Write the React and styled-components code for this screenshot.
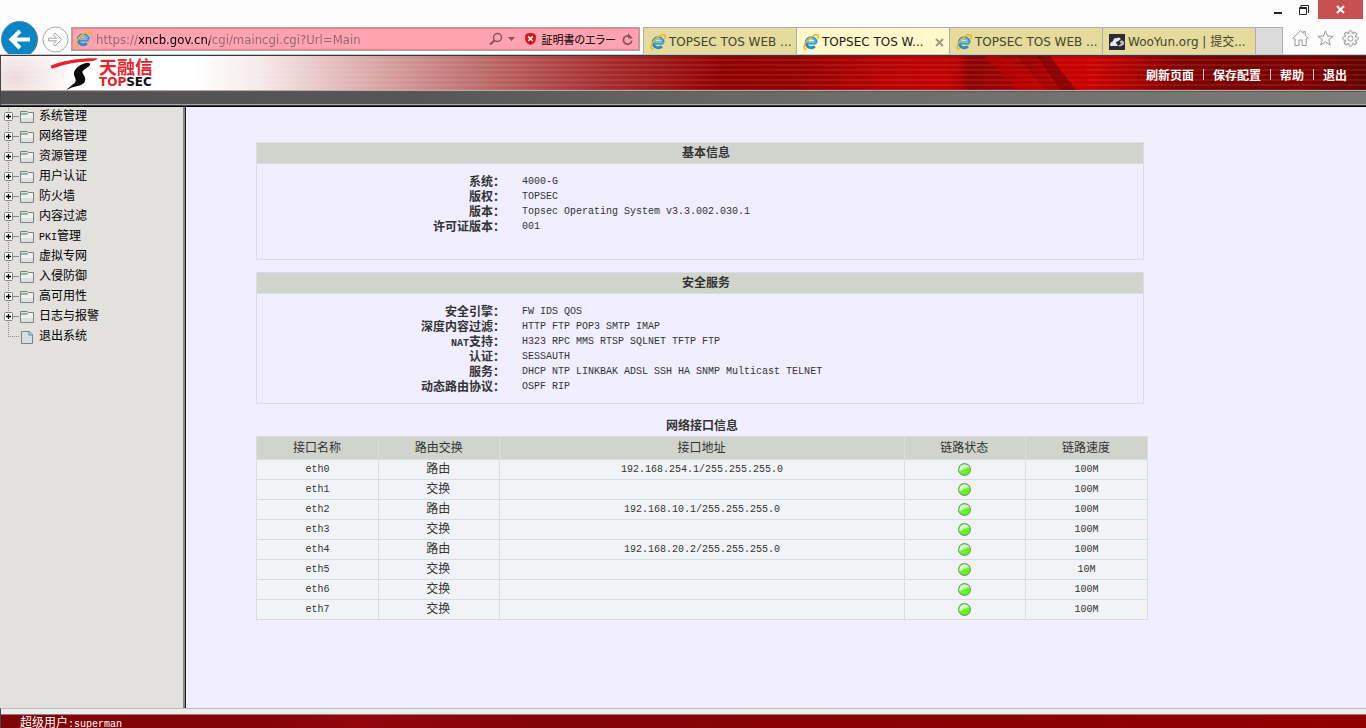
import React from 'react';
import styled, { createGlobalStyle } from 'styled-components';

const GlobalStyle = createGlobalStyle`
  *, *::before, *::after { box-sizing: border-box; }
  body {
    margin: 0;
    font-family: "Liberation Mono", "Noto Sans CJK SC", monospace;
    font-size: 12px;
    color: #333;
    background: #f0eeff;
  }
  a { color: inherit; text-decoration: none; }
  button { font: inherit; color: inherit; border: 0; padding: 0; background: none; }
  svg { display: block; flex: none; }
`;

const Page = styled.div`
  display: flex;
  flex-direction: column;
  height: 100vh;
  overflow: hidden;
`;

/* ---------- browser frame ---------- */

const Browser = styled.div`
  flex: none;
  overflow: hidden;
  background: #fcfcfc;
  border-bottom: 1px solid #c4c4c4;
`;

const TitleBar = styled.div`
  display: flex;
  justify-content: flex-end;
  height: 27px;
  padding-right: 3px;
`;

const WindowButton = styled.button`
  display: flex;
  align-items: center;
  justify-content: center;
  width: ${(p) => (p.$close ? 45 : 27)}px;
  height: 19px;
  margin-right: ${(p) => (p.$gap ? 1 : 0)}px;
  background: ${(p) => (p.$close ? '#c75050' : 'transparent')};
`;

const NavRow = styled.div`
  display: flex;
  height: 27px;
`;

const HistoryButtons = styled.div`
  display: flex;
  flex: none;
  gap: 4px;
  width: 71px;
  height: 38px;
  margin-top: -7px;
  padding-left: 1px;
  align-items: center;
`;

const AddressBar = styled.form`
  display: flex;
  flex: 1;
  align-items: center;
  gap: 5px;
  min-width: 0;
  height: 24px;
  margin: 0 3px 0 0;
  padding: 0 5px 0 3px;
  border: 1px solid #a9a9a9;
  background: #ffa3b0;
  box-shadow: inset 0 0 0 1px #ff7b8a;
`;

const AddressInput = styled.input`
  flex: 1;
  min-width: 0;
  height: 20px;
  padding: 0;
  border: 0;
  outline: 0;
  font: 13px "DejaVu Sans Condensed", "Noto Sans", sans-serif;
  color: transparent;
  caret-color: #000;
  background: linear-gradient(to right, #8a6a70 43px, #000 43px, #000 114px, #8a6a70 114px);
  background-clip: text;
  -webkit-background-clip: text;
`;

const CertButton = styled.button`
  display: flex;
  align-items: center;
  gap: 5px;
  margin: 0 1px 0 5px;
  font: 11px "Noto Sans CJK JP", sans-serif;
  font-feature-settings: "palt";
  color: #000;
  white-space: nowrap;
`;

const IconButton = styled.button`
  display: flex;
`;

const Tabs = styled.div`
  display: flex;
  flex: none;
  border-right: 1px solid #adadad;
`;

const Tab = styled.button`
  display: flex;
  align-items: center;
  gap: 3px;
  width: 153px;
  padding: 2px 5px 0 6px;
  border-top: 1px solid #adadad;
  border-left: 1px solid #adadad;
  font: 12px "DejaVu Sans", "Noto Sans CJK SC", sans-serif;
  white-space: nowrap;
  color: ${(p) => (p.$active ? '#1c1c14' : '#45432f')};
  background: ${(p) => (p.$active ? '#fff8ca' : '#e4db9c')};
`;

const TabText = styled.span`
  flex: 1;
  height: 16px;
  line-height: 16px;
  text-align: left;
`;

const NewTab = styled.button`
  width: 27px;
  border-top: 1px solid #adadad;
  border-left: 1px solid #adadad;
  background: #dbdbdb;
`;

const Tools = styled.div`
  display: flex;
  flex: none;
  align-items: center;
  gap: 8px;
  padding: 0 7px 5px 9px;
`;

/* ---------- site header ---------- */

const Header = styled.header`
  position: relative;
  z-index: 1;
  flex: none;
  border-top: 1px solid #3a3a3a;
  border-left: 1px solid #444;
  box-shadow: 0 1px 0 #000;
`;

const Banner = styled.div`
  position: relative;
  display: flex;
  justify-content: space-between;
  height: 34px;
  background:
    repeating-linear-gradient(to bottom, transparent 0 3px, rgba(255, 255, 255, 0.16) 4px, transparent 5px),
    radial-gradient(ellipse 60px 40px at 14px 22px, rgba(190, 120, 120, 0.28), transparent),
    linear-gradient(to right,
      #fff 0, #fff 14%, #f6e9e9 19%, #e9c9c9 23%, #d39a98 29%, #c07573 34%,
      #b04a4a 40%, #a42a2a 45%, #9a1010 50%, #900000 53%, #930000 58%,
      #b80000 65%, #c00000 69%, #b40000 70%, #8c0000 71%, #a00000 74%, #c00000 77%,
      #c80000 80%, #a80000 83%, #820000 86%, #780000 91%, #820000 95%, #640000 100%);
`;

const BannerRays = styled.svg`
  position: absolute;
  top: 0;
  left: 70%;
`;

const Logo = styled.a`
  display: flex;
  gap: 1px;
  padding: 1px 0 0 49px;
`;

const LogoText = styled.span`
  display: flex;
  flex-direction: column;
  font-weight: bold;
  color: #e3242b;
`;

const LogoChinese = styled.span`
  font-family: "Noto Sans CJK SC", sans-serif;
  font-size: 18px;
  line-height: 18px;
`;

const LogoLatin = styled.span`
  font-family: "DejaVu Sans", sans-serif;
  font-size: 12px;
  line-height: 14px;
  b { color: #111; }
`;

const HeaderNav = styled.nav`
  position: relative;
  display: flex;
  align-items: flex-end;
  padding: 0 19px 3px 0;
  font-weight: bold;
  line-height: 20px;
  color: #fff;
`;

const HeaderLink = styled.a`
  & + &::before {
    content: "";
    display: inline-block;
    width: 1px;
    height: 11px;
    margin: 0 9px;
    vertical-align: 0;
    background: #e6caca;
  }
`;

const Strip = styled.div`
  height: 16px;
  border-top: 1px solid #b9a8a8;
  border-bottom: 1px solid #3c3c3c;
  box-shadow: inset 0 -1px 0 #a5a5a5, inset 0 1px 0 #5a5a5a;
  background: linear-gradient(to right, #505050, #565656 30%, #6c6c69 60%, #7a7a79);
`;

/* ---------- body ---------- */

const Body = styled.div`
  display: flex;
  flex: 1;
  min-height: 0;
`;

const Sidebar = styled.aside`
  flex: none;
  width: 186px;
  background: #e2e1dd;
  border-right: 1px solid #1e1e1e;
  box-shadow: inset -2px 0 0 #858585;
`;

const Tree = styled.ul`
  margin: 0;
  padding: 0;
  list-style: none;
`;

const TreeLink = styled.a`
  display: flex;
  align-items: center;
  height: 20px;
  color: #000;
`;

const TreeLabel = styled.span`
  margin-left: 4px;
  padding-top: 3px;
  line-height: 17px;
`;

const Latin = styled.span`
  font-size: 10px;
`;

const Main = styled.main`
  flex: 1;
  min-width: 0;
  overflow: auto;
  padding: 36px 218px 0 70px;
  background: #f0eeff;
`;

const Panel = styled.section`
  min-height: 118px;
  margin: 0 4px 12px 0;
  padding-bottom: 9px;
  border: 1px solid #dcdce6;
`;

const PanelTitle = styled.h2`
  margin: 0;
  height: 21px;
  padding: 2px 0 0 12px;
  border-bottom: 1px solid #dadde0;
  font-size: 12px;
  line-height: 18px;
  text-align: center;
  background: #d0d4cc;
`;

const Facts = styled.dl`
  display: grid;
  grid-template-columns: 28% 1fr;
  column-gap: 17px;
  margin: 10px 0 0;
`;

const FactName = styled.dt`
  height: 15px;
  line-height: 18px;
  text-align: right;
  font-weight: bold;
`;

const FactValue = styled.dd`
  height: 15px;
  margin: 0;
  font-size: 10px;
  line-height: 15px;
`;

const InterfaceTable = styled.table`
  width: 100%;
  table-layout: fixed;
  border-collapse: collapse;
  text-align: center;
`;

const Caption = styled.caption`
  height: 20px;
  padding-top: 2px;
  line-height: 18px;
  font-weight: bold;
`;

const Column = styled.col`
  width: ${(p) => p.$width};
`;

const HeadCell = styled.th`
  height: 23px;
  padding: 2px 1px 0 0;
  border: 1px solid #d9dde2;
  font-weight: normal;
  line-height: 18px;
  background: #d0d4cc;
`;

const Cell = styled.td`
  height: 20px;
  padding: ${(p) => (p.$cjk ? '2px 2px 0 0' : 0)};
  border: 1px solid #d9dde2;
  font-size: ${(p) => (p.$cjk ? 12 : 10)}px;
  line-height: ${(p) => (p.$cjk ? 17 : 18)}px;
  background: #f2f3f6;
  svg { margin: 0 auto; }
`;

/* ---------- status bar ---------- */

const StatusBar = styled.footer`
  flex: none;
  height: 20px;
  overflow: hidden;
  border-left: 1px solid #444;
  border-top: 1px solid #bdbdbd;
  background: #ececec;
`;

const StatusText = styled.div`
  margin-top: 5px;
  padding-left: 19px;
  border-top: 1px solid #9a7a7a;
  line-height: 18px;
  color: #fff;
  background: linear-gradient(to right, #7e0408, #860408 20%, #92060c 26%, #840408 40%, #900000);
`;

/* ---------- icons ---------- */

const IeIcon = () => (
  <svg width="16" height="16" viewBox="0 0 16 16" fill="none" aria-hidden="true">
    <path d="M4 8.900h9.500M13.200 8.600a5 5.100 0 1 0-1.400 3.700" stroke="#2a8cc9" strokeWidth="3" />
    <path d="M4.600 8.500h7.800M12.200 7.400a4.200 4.200 0 0 0-8.200 .8" stroke="#6cc5ee" strokeWidth="1.400" />
    <path d="M3.600 15.100C-.2 15.800 .4 10.600 5 5.800S14.600-.6 15.200 1.600c.3 1-.1 2.400-.8 3.600" stroke="#f2b61c" strokeWidth="1.600" />
  </svg>
);

const CloudIcon = () => (
  <svg width="16" height="16" viewBox="0 0 16 16" aria-hidden="true">
    <rect width="16" height="16" fill="#282b33" />
    <path d="M1.500 12C.3 10 2 7.500 4 7.500 4 5 6 3.200 8 4.200 9.500 2.800 12 4 11.500 5.500L6.800 8.500 9 12Z" fill="#e8e8e8" />
    <path d="M10 12.500 8 9.500l4.500-3.200c2 .2 3 1.700 2.600 3.300-.4 1.600-2.500 2.900-5.100 2.900Z" fill="#b9bcc2" />
    <path d="m7.500 8.800 3.200-2 .5 2.200 1.800-.4-3.400 3.200Z" fill="#282b33" />
  </svg>
);

const BackIcon = () => (
  <svg width="37" height="37" viewBox="0 0 37 37" fill="none" aria-hidden="true">
    <circle cx="18.500" cy="18.500" r="18" fill="#0a86c8" stroke="#5b7f93" />
    <path d="M29 18.500H11M19 10l-8.500 8.500L19 27" stroke="#fff" strokeWidth="4" />
  </svg>
);

const ForwardIcon = () => (
  <svg width="27" height="27" viewBox="0 0 27 27" fill="none" stroke="#a6a6a6" aria-hidden="true">
    <circle cx="13.500" cy="13.500" r="12.500" />
    <path d="M6.500 12.200h8l-3.300-3.300L13 7l6.600 6.500L13 20l-1.800-1.900 3.300-3.300h-8Z" />
  </svg>
);

const Minimize = () => (
  <svg width="10" height="16" viewBox="0 0 10 16" aria-hidden="true">
    <path d="M2 10h8v2H2z" fill="#222" />
  </svg>
);

const Restore = () => (
  <svg width="12" height="12" viewBox="0 0 12 12" fill="none" stroke="#222" aria-hidden="true">
    <path d="M1.500 3.500h7v7h-7z" />
    <path d="M1 4.500h8M3 1.500h7.500V9" />
    <path d="M3 1.500V3" />
  </svg>
);

const Close = ({ size = 9, color = '#fff' }) => (
  <svg width={size} height={size} viewBox="0 0 9 9" aria-hidden="true">
    <path d="m1 1 7 7M8 1 1 8" stroke={color} strokeWidth="2" />
  </svg>
);

const SearchIcon = () => (
  <svg width="14" height="14" viewBox="0 0 14 14" fill="none" stroke="#85545c" aria-hidden="true">
    <circle cx="8.500" cy="5.500" r="4" strokeWidth="1.500" />
    <path d="M5.500 8.500 1 12.500" strokeWidth="2.200" />
  </svg>
);

const CaretIcon = () => (
  <svg width="7" height="4" viewBox="0 0 7 4" aria-hidden="true">
    <path d="M0 0h7L3.500 4Z" fill="#85545c" />
  </svg>
);

const ShieldIcon = () => (
  <svg width="11" height="12" viewBox="0 0 11 12" aria-hidden="true">
    <path d="M2 .5 5.500 0 9 .5l1.800 1.700V6C10.800 9 8.500 11 5.500 12 2.500 11 .2 9 .2 6V2.200Z" fill="#d0141c" />
    <path d="m3.200 3.400 4.600 4.600M7.800 3.400 3.200 8" stroke="#fff" strokeWidth="1.500" />
  </svg>
);

const ReloadIcon = () => (
  <svg width="12" height="13" viewBox="0 0 12 13" fill="none" aria-hidden="true">
    <path d="M9.800 7.500A4.200 4.200 0 1 1 7 3.100" stroke="#85545c" strokeWidth="1.700" />
    <path d="M6 0v5.500h5Z" fill="#85545c" />
  </svg>
);

const HomeIcon = () => (
  <svg width="17" height="16" viewBox="0 0 17 16" fill="none" stroke="#999" aria-hidden="true">
    <path d="M.8 8.200 8.500.8l2.700 2.600V1.500h2v3.800l3 2.900-1.200 1.200-.8-.8v6.900h-4V10H7v5.500H3V8.600l-1 .8Z" />
  </svg>
);

const StarIcon = () => (
  <svg width="17" height="16" viewBox="0 0 17 16" fill="none" stroke="#999" aria-hidden="true">
    <path d="m8.500.9 2 5.200 5.700.2-4.500 3.400 1.600 5.400-4.800-3.200-4.800 3.200 1.600-5.400L.8 6.300l5.700-.2Z" />
  </svg>
);

const GearIcon = () => {
  const teeth = Array.from({ length: 8 }, (_, i) => i * 45);
  return (
    <svg width="17" height="17" viewBox="-8.500 -8.500 17 17" aria-hidden="true">
      {teeth.map((a) => (
        <rect key={a} x="-1.600" y="-7.600" width="3.200" height="4" rx=".6" fill="#fcfcfc" stroke="#999" transform={`rotate(${a})`} />
      ))}
      <circle r="5.300" fill="#fcfcfc" />
      {teeth.map((a) => (
        <path key={a} d="M1.600-5.300A5.500 5.500 0 0 1 2.600-4.900" fill="none" stroke="#999" transform={`rotate(${a})`} />
      ))}
      <circle r="2.600" fill="none" stroke="#999" />
    </svg>
  );
};

const TopsecMark = () => (
  <svg width="48" height="33" viewBox="0 0 48 33" aria-hidden="true">
    <path d="M1 8.500C14 3.500 30 1 48 1.400 46 3 44 3.800 41 4.200 28 4.600 15 7 2.500 11.600 1 11.300.5 9.500 1 8.500Z" fill="#e3242b" />
    <path d="M37.500 5.700c2.400-.4 3.300 1.500 2 3.100C36 11.500 32.600 13.500 32.400 15c.3 2.600 3.600 4.800 2.700 8.400-.8 3.400-4 4.600-7.600 5.600-4.300 1-7.500 2-10.800 3.900 3-3.700 7.100-5.500 8.600-7.900 1.600-2.700-1.500-5.200-1.400-8.500.2-5.200 7.300-10.100 13.600-10.800Z" fill="#0c0c0c" />
  </svg>
);

const TreeJoint = ({ leaf }) => (
  <svg width="20" height="20" viewBox="0 0 20 20" fill="none" aria-hidden="true">
    <path d={leaf ? 'M8.500 0v11' : 'M8.500 0v20'} stroke="#8a8a8a" strokeDasharray="1 1" />
    {leaf ? (
      <path d="M8 10.500h12" stroke="#8a8a8a" strokeDasharray="1 1" />
    ) : (
      <>
        <path d="M13 10.500h6" stroke="#8a8a8a" />
        <rect x="4.500" y="6.500" width="8" height="8" rx="1" fill="#fff" stroke="#848484" />
        <path d="M6 10.500h5M8.500 8v5" stroke="#000" strokeWidth="1.300" />
      </>
    )}
  </svg>
);

const FolderIcon = () => (
  <svg width="15" height="16" viewBox="0 -2 15 16" aria-hidden="true">
    <path d="M.5 2.500h6l1 1 1-1h5v10H.5z" fill="#f3f1e8" stroke="#7b8280" />
    <path d="M1 8h12v4H1z" fill="#dbe0e4" />
    <path d="M1 1.500h6.500v2H1z" fill="#b9ece4" />
    <path d="M.5 4V1.500h7" fill="none" stroke="#7b8280" />
    <path d="M1 4h6.500" stroke="#55706c" />
  </svg>
);

const PageIcon = () => (
  <svg width="15" height="16" viewBox="0 -2 15 16" aria-hidden="true">
    <path d="M1.500 1.500h8l3 3v9h-11z" fill="#d9dee3" stroke="#7b8280" />
    <path d="M9 1.500v3.500h3.500" fill="#c8f0e8" stroke="#4f8a84" />
  </svg>
);

const StatusLight = () => (
  <svg width="13" height="13" viewBox="0 0 13 13" aria-hidden="true">
    <circle cx="6.500" cy="6.500" r="5.900" fill="#66f41e" stroke="#6fa070" strokeWidth="1.200" />
    <path d="M1.600 8.200C.8 4 3.300 1.500 6.500 1.500c2.300 0 4 1.100 4.700 2.700C8 4.600 5 5.800 1.600 8.200Z" fill="#dcfacd" />
    <path d="M1.600 8.200C5 5.800 8 4.600 11.200 4.200" fill="none" stroke="#a6f684" strokeWidth="1.200" />
  </svg>
);

/* ---------- data ---------- */

const tabs = [
  { title: 'TOPSEC TOS WEB ...' },
  { title: 'TOPSEC TOS W...', active: true },
  { title: 'TOPSEC TOS WEB ...' },
  { title: 'WooYun.org | 提交...', cloud: true },
];

const headerLinks = ['刷新页面', '保存配置', '帮助', '退出'];

const treeItems = [
  '系统管理', '网络管理', '资源管理', '用户认证', '防火墙', '内容过滤',
  'PKI管理', '虚拟专网', '入侵防御', '高可用性', '日志与报警',
];

const basicInfo = [
  ['系统', '4000-G'],
  ['版权', 'TOPSEC'],
  ['版本', 'Topsec Operating System v3.3.002.030.1'],
  ['许可证版本', '001'],
];

const services = [
  ['安全引擎', 'FW IDS QOS'],
  ['深度内容过滤', 'HTTP FTP POP3 SMTP IMAP'],
  ['NAT支持', 'H323 RPC MMS RTSP SQLNET TFTP FTP'],
  ['认证', 'SESSAUTH'],
  ['服务', 'DHCP NTP LINKBAK ADSL SSH HA SNMP Multicast TELNET'],
  ['动态路由协议', 'OSPF RIP'],
];

const interfaces = [
  ['eth0', '路由', '192.168.254.1/255.255.255.0', '100M'],
  ['eth1', '交换', '', '100M'],
  ['eth2', '路由', '192.168.10.1/255.255.255.0', '100M'],
  ['eth3', '交换', '', '100M'],
  ['eth4', '路由', '192.168.20.2/255.255.255.0', '100M'],
  ['eth5', '交换', '', '10M'],
  ['eth6', '交换', '', '100M'],
  ['eth7', '交换', '', '100M'],
];

/* Sets a leading run of Latin letters in the smaller Latin size. */
const Mixed = ({ text }) => {
  const [, latin, rest] = text.match(/^([A-Za-z]*)(.*)$/);
  return <>{latin && <Latin>{latin}</Latin>}{rest}</>;
};

const InfoPanel = ({ title, facts }) => (
  <Panel>
    <PanelTitle>{title}</PanelTitle>
    <Facts>
      {facts.map(([name, value]) => (
        <React.Fragment key={name}>
          <FactName><Mixed text={`${name}：`} /></FactName>
          <FactValue>{value}</FactValue>
        </React.Fragment>
      ))}
    </Facts>
  </Panel>
);

export default function App() {
  return (
    <Page>
      <GlobalStyle />
      <Browser>
        <TitleBar>
          <WindowButton aria-label="Minimize"><Minimize /></WindowButton>
          <WindowButton aria-label="Restore" $gap><Restore /></WindowButton>
          <WindowButton aria-label="Close" $close><Close /></WindowButton>
        </TitleBar>
        <NavRow>
          <HistoryButtons>
            <IconButton aria-label="Back"><BackIcon /></IconButton>
            <IconButton aria-label="Forward"><ForwardIcon /></IconButton>
          </HistoryButtons>
          <AddressBar onSubmit={(e) => e.preventDefault()}>
            <IeIcon />
            <AddressInput aria-label="Address" defaultValue="https://xncb.gov.cn/cgi/maincgi.cgi?Url=Main" />
            <IconButton type="button" aria-label="Search"><SearchIcon /></IconButton>
            <IconButton type="button" aria-label="Show history"><CaretIcon /></IconButton>
            <CertButton type="button"><ShieldIcon />証明書のエラー</CertButton>
            <IconButton type="button" aria-label="Reload"><ReloadIcon /></IconButton>
          </AddressBar>
          <Tabs>
            {tabs.map((tab, i) => (
              <Tab key={i} $active={tab.active}>
                {tab.cloud ? <CloudIcon /> : <IeIcon />}
                <TabText>{tab.title}</TabText>
                {tab.active && <Close color="#a09c80" />}
              </Tab>
            ))}
            <NewTab aria-label="New tab" />
          </Tabs>
          <Tools>
            <IconButton aria-label="Home"><HomeIcon /></IconButton>
            <IconButton aria-label="Favorites"><StarIcon /></IconButton>
            <IconButton aria-label="Settings"><GearIcon /></IconButton>
          </Tools>
        </NavRow>
      </Browser>

      <Header>
        <Banner>
          <BannerRays width="130" height="34" viewBox="0 0 130 34" aria-hidden="true">
            <path d="M28 0h18l44 34H60Z" fill="#c80000" opacity=".45" />
            <path d="M60 0h20l22 34H88Z" fill="#500" opacity=".2" />
            <path d="M80 0h13l26 34h-16Z" fill="#500" opacity=".5" />
            <path d="M93 0h37v34h-11Z" fill="#cc0000" opacity=".4" />
          </BannerRays>
          <Logo href="#">
            <TopsecMark />
            <LogoText>
              <LogoChinese>天融信</LogoChinese>
              <LogoLatin>TOP<b>SEC</b></LogoLatin>
            </LogoText>
          </Logo>
          <HeaderNav>
            {headerLinks.map((text) => (
              <HeaderLink key={text} href="#">{text}</HeaderLink>
            ))}
          </HeaderNav>
        </Banner>
        <Strip />
      </Header>

      <Body>
        <Sidebar>
          <Tree>
            {treeItems.map((text) => (
              <li key={text}>
                <TreeLink href="#">
                  <TreeJoint />
                  <FolderIcon />
                  <TreeLabel><Mixed text={text} /></TreeLabel>
                </TreeLink>
              </li>
            ))}
            <li>
              <TreeLink href="#">
                <TreeJoint leaf />
                <PageIcon />
                <TreeLabel>退出系统</TreeLabel>
              </TreeLink>
            </li>
          </Tree>
        </Sidebar>

        <Main>
          <InfoPanel title="基本信息" facts={basicInfo} />
          <InfoPanel title="安全服务" facts={services} />
          <InterfaceTable>
            <Caption>网络接口信息</Caption>
            <colgroup>
              <Column $width="13.7%" />
              <Column $width="13.6%" />
              <Column />
              <Column $width="13.6%" />
              <Column $width="13.7%" />
            </colgroup>
            <thead>
              <tr>
                {['接口名称', '路由交换', '接口地址', '链路状态', '链路速度'].map((text) => (
                  <HeadCell key={text} scope="col">{text}</HeadCell>
                ))}
              </tr>
            </thead>
            <tbody>
              {interfaces.map(([name, mode, address, speed]) => (
                <tr key={name}>
                  <Cell>{name}</Cell>
                  <Cell $cjk>{mode}</Cell>
                  <Cell>{address}</Cell>
                  <Cell><StatusLight /></Cell>
                  <Cell>{speed}</Cell>
                </tr>
              ))}
            </tbody>
          </InterfaceTable>
        </Main>
      </Body>

      <StatusBar>
        <StatusText>超级用户<Latin>:superman</Latin></StatusText>
      </StatusBar>
    </Page>
  );
}
